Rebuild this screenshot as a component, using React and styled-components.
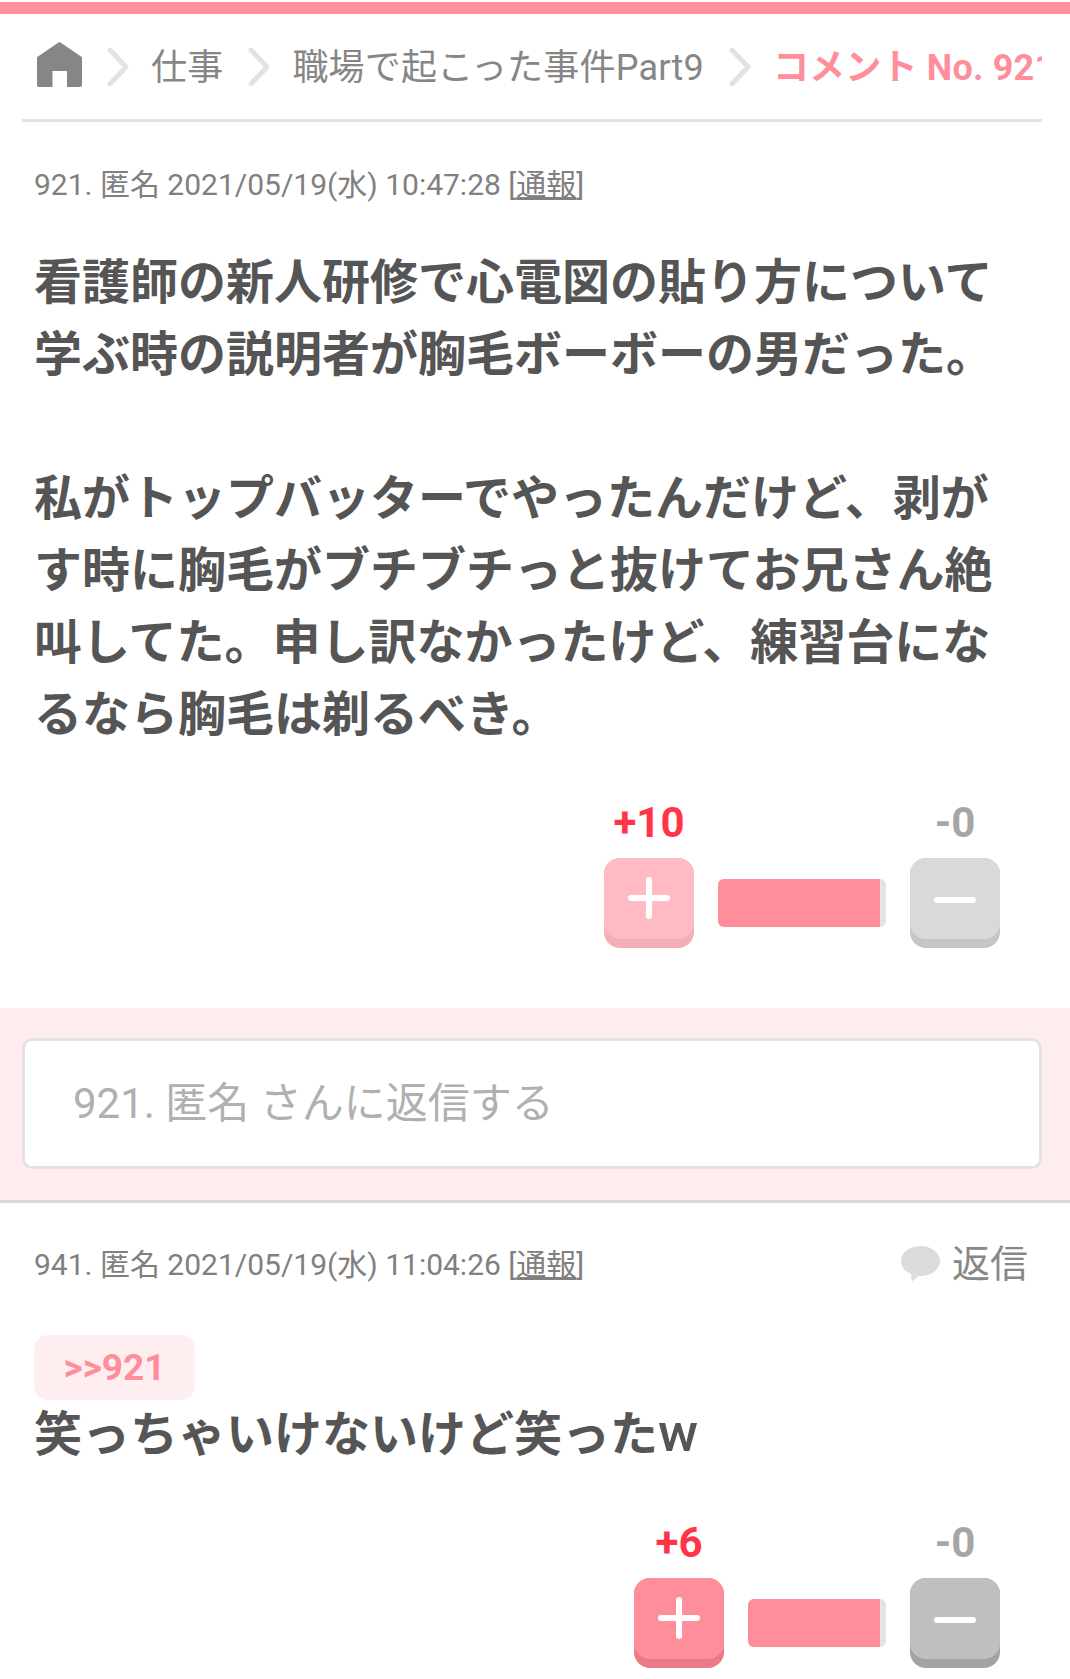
import React from "react";
import styled, { createGlobalStyle } from "styled-components";

const GlobalStyle = createGlobalStyle`
  html, body {
    margin: 0;
    padding: 0;
    background: #fff;
    font-family: Roboto, "Noto Sans CJK JP", sans-serif;
  }
`;

const Page = styled.div`
  width: 1070px;
  height: 1679px;
  overflow: hidden;
  background: #fff;
`;

const TopBar = styled.div`
  height: 12px;
  margin-top: 2px;
  background: #ff8e9b;
`;

const Breadcrumb = styled.nav`
  display: flex;
  align-items: center;
  height: 105px;
  margin: 0 28px 0 22px;
  padding: 0 0 0 15px;
  border-bottom: 3px solid #e3e3e3;
  overflow: hidden;
  white-space: nowrap;
  font-size: 36px;
  letter-spacing: 0.2px;
  color: #868686;
`;

const Crumb = styled.span`
  flex-shrink: 0;
  margin-top: 2px;
  line-height: 100px;
`;

const CurrentCrumb = styled(Crumb)`
  color: #ff8e9b;
  font-weight: 700;
`;

const HomeIcon = styled.svg`
  flex-shrink: 0;
  width: 45px;
  height: 45px;
  margin-bottom: 4px;
`;

const Chevron = styled.svg`
  flex-shrink: 0;
  width: 22px;
  height: 38px;
  margin: 0 22px 0 25px;
`;

const Comment = styled.section`
  padding: ${(props) => props.$top}px 0 0;
`;

const MetaRow = styled.div`
  display: flex;
  justify-content: space-between;
  align-items: center;
  height: 44px;
  padding: 0 42px 0 34px;
`;

const Meta = styled.div`
  font-size: 30px;
  color: #808080;
  white-space: nowrap;
`;

const ReportLink = styled.a`
  color: #808080;
  text-decoration: underline;
`;

const ReplyLink = styled.div`
  display: flex;
  align-items: center;
  gap: 12px;
  padding-top: 4px;
  font-size: 38px;
  line-height: 44px;
  color: #888;
`;

const AnchorChip = styled.div`
  width: 161px;
  height: 65px;
  margin: 51px 0 0 34px;
  border-radius: 14px;
  background: #ffeef0;
  color: #ff8e9b;
  font-size: 37px;
  font-weight: 700;
  line-height: 65px;
  text-align: center;
`;

const Body = styled.div`
  width: 966px;
  margin: ${(props) => props.$top}px 0 0 34px;
  font-size: 48px;
  font-weight: 700;
  line-height: 72px;
  color: #555;
`;

const WideLetter = styled.span`
  font-size: 54px;
  font-weight: 500;
  line-height: 1;
`;

const VoteRow = styled.div`
  display: flex;
  justify-content: flex-end;
  align-items: flex-start;
  gap: 24px;
  margin-top: 48px;
  padding-right: 70px;
`;

const VoteColumn = styled.div`
  display: flex;
  flex-direction: column;
  align-items: center;
  width: 90px;
`;

const Score = styled.div`
  height: 48px;
  margin-bottom: 11px;
  font-size: 42px;
  font-weight: 700;
  line-height: 48px;
  white-space: nowrap;
  color: ${(props) => props.$color};
`;

const VoteButton = styled.button`
  position: relative;
  width: 90px;
  height: 90px;
  padding: 0;
  border: none;
  border-radius: 16px;
  background: ${(props) => props.$shade};

  &::before {
    content: "";
    position: absolute;
    top: 0;
    left: 0;
    right: 0;
    height: 81px;
    border-radius: 16px;
    background: ${(props) => props.$face};
  }
`;

const VoteGlyph = styled.svg`
  position: absolute;
  top: 19px;
  left: 24px;
  width: 42px;
  height: 42px;
`;

const RatioBar = styled.div`
  flex-shrink: 0;
  width: ${(props) => props.$width}px;
  height: 48px;
  margin-top: 80px;
  border-radius: 6px;
  overflow: hidden;
  background: #e4e4e4;
`;

const RatioFill = styled.div`
  height: 100%;
  background: #ff8e9b;
`;

const ReplyBand = styled.div`
  margin-top: 60px;
  padding: 30px 28px 31px 22px;
  border-bottom: 3px solid #d9d9d9;
  background: #ffecee;
`;

const ReplyInput = styled.input`
  display: block;
  box-sizing: border-box;
  width: 100%;
  height: 131px;
  padding: 0 48px;
  border: 3px solid #e3e3e3;
  border-radius: 10px;
  background: #fff;
  outline: none;
  font-family: inherit;
  font-size: 42px;

  &::placeholder {
    color: #b0b0b0;
    opacity: 1;
  }
`;

const Plus = () => (
  <VoteGlyph viewBox="0 0 42 42">
    <path d="M21 3v36M3 21h36" stroke="#fff" strokeWidth="6" strokeLinecap="round" fill="none" />
  </VoteGlyph>
);

const Minus = () => (
  <VoteGlyph viewBox="0 0 42 42">
    <path d="M3 23h36" stroke="#fff" strokeWidth="6" strokeLinecap="round" fill="none" />
  </VoteGlyph>
);

const Votes = ({ plus, barWidth, fill, voted }) => (
  <VoteRow>
    <VoteColumn>
      <Score $color="#ff3547">{plus}</Score>
      <VoteButton $face={voted ? "#ff8e9b" : "#ffbac4"} $shade={voted ? "#ec7986" : "#f5aeb8"}>
        <Plus />
      </VoteButton>
    </VoteColumn>
    <RatioBar $width={barWidth}>
      <RatioFill style={{ width: fill }} />
    </RatioBar>
    <VoteColumn>
      <Score $color="#a6a6a6">-0</Score>
      <VoteButton $face={voted ? "#bfbfbf" : "#d9d9d9"} $shade={voted ? "#a3a3a3" : "#c6c6c6"}>
        <Minus />
      </VoteButton>
    </VoteColumn>
  </VoteRow>
);

const Sep = () => (
  <Chevron viewBox="0 0 22 38">
    <path d="M3 2l16 17L3 36" stroke="#e3e3e3" strokeWidth="5" strokeLinecap="round" strokeLinejoin="round" fill="none" />
  </Chevron>
);

const App = () => (
  <Page>
    <GlobalStyle />
    <TopBar />
    <Breadcrumb>
      <HomeIcon viewBox="0 0 45 45">
        <path
          d="M21.500.6a1.500 1.500 0 0 1 2 0L44 14.500a2 2 0 0 1 1 1.500V43a2 2 0 0 1-2 2H30V29H15.500v16H2a2 2 0 0 1-2-2V16a2 2 0 0 1 1-1.500z"
          fill="#868686"
        />
      </HomeIcon>
      <Sep />
      <Crumb>仕事</Crumb>
      <Sep />
      <Crumb>職場で起こった事件Part9</Crumb>
      <Sep />
      <CurrentCrumb>コメント No. 921</CurrentCrumb>
    </Breadcrumb>

    <Comment $top={38}>
      <MetaRow>
        <Meta>
          921. 匿名 2021/05/19(水) 10:47:28 [<ReportLink>通報</ReportLink>]
        </Meta>
      </MetaRow>
      <Body $top={43}>
        看護師の新人研修で心電図の貼り方について学ぶ時の説明者が胸毛ボーボーの男だった。
        <br />
        <br />
        私がトップバッターでやったんだけど、剥がす時に胸毛がブチブチっと抜けてお兄さん絶叫してた。申し訳なかったけど、練習台になるなら胸毛は剃るべき。
      </Body>
      <Votes plus="+10" barWidth={168} fill={162} />
    </Comment>

    <ReplyBand>
      <ReplyInput placeholder="921. 匿名 さんに返信する" />
    </ReplyBand>

    <Comment $top={37}>
      <MetaRow>
        <Meta>
          941. 匿名 2021/05/19(水) 11:04:26 [<ReportLink>通報</ReportLink>]
        </Meta>
        <ReplyLink>
          <svg width="39" height="36" viewBox="0 0 39 36">
            <path
              d="M19.500 0C30.300 0 39 6.700 39 15s-8.700 15-19.500 15h-2L11 35.500c-.6-2.500-.8-5-.6-7.300C4.200 25.700 0 20.700 0 15 0 6.700 8.700 0 19.500 0z"
              fill="#dcdcdc"
            />
          </svg>
          返信
        </ReplyLink>
      </MetaRow>
      <AnchorChip>&gt;&gt;921</AnchorChip>
      <Body $top={-1}>
        笑っちゃいけないけど笑った<WideLetter>w</WideLetter>
      </Body>
      <Votes plus="+6" barWidth={138} fill={132} voted />
    </Comment>
  </Page>
);

export default App;
